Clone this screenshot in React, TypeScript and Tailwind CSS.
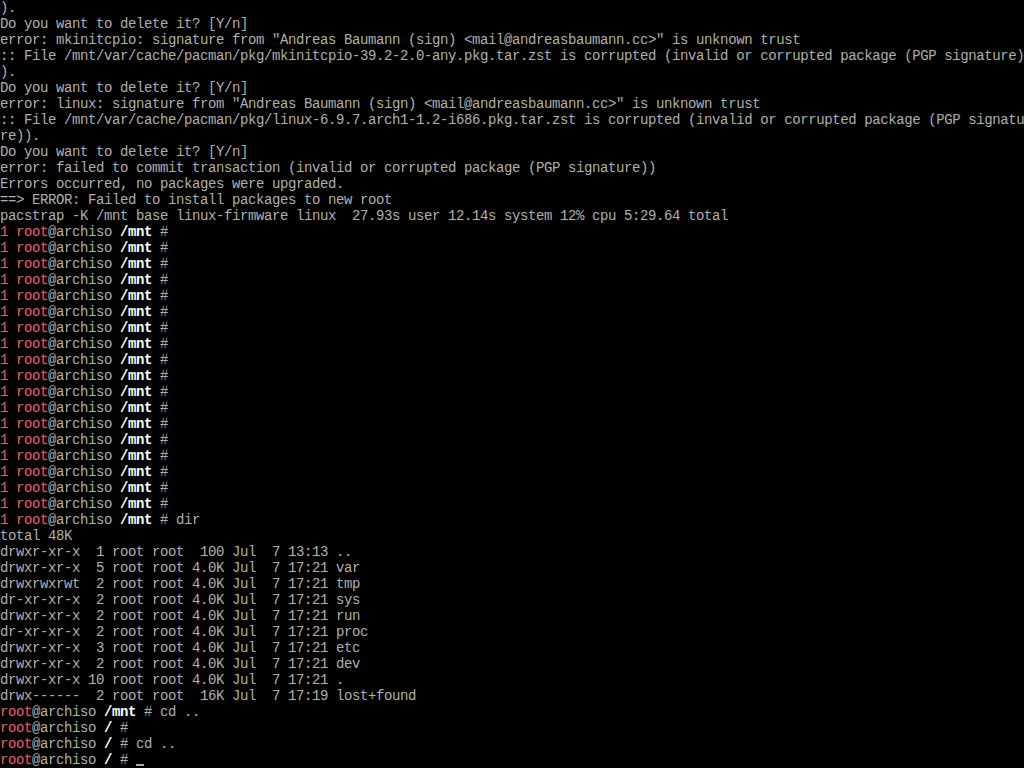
import React from "react";

const plain = [
  ").",
  "Do you want to delete it? [Y/n]",
  'error: mkinitcpio: signature from "Andreas Baumann (sign) <mail@andreasbaumann.cc>" is unknown trust',
  ":: File /mnt/var/cache/pacman/pkg/mkinitcpio-39.2-2.0-any.pkg.tar.zst is corrupted (invalid or corrupted package (PGP signature)",
  ").",
  "Do you want to delete it? [Y/n]",
  'error: linux: signature from "Andreas Baumann (sign) <mail@andreasbaumann.cc>" is unknown trust',
  ":: File /mnt/var/cache/pacman/pkg/linux-6.9.7.arch1-1.2-i686.pkg.tar.zst is corrupted (invalid or corrupted package (PGP signatu",
  "re)).",
  "Do you want to delete it? [Y/n]",
  "error: failed to commit transaction (invalid or corrupted package (PGP signature))",
  "Errors occurred, no packages were upgraded.",
  "==> ERROR: Failed to install packages to new root",
  "pacstrap -K /mnt base linux-firmware linux  27.93s user 12.14s system 12% cpu 5:29.64 total",
];

const listing = [
  "total 48K",
  "drwxr-xr-x  1 root root  100 Jul  7 13:13 ..",
  "drwxr-xr-x  5 root root 4.0K Jul  7 17:21 var",
  "drwxrwxrwt  2 root root 4.0K Jul  7 17:21 tmp",
  "dr-xr-xr-x  2 root root 4.0K Jul  7 17:21 sys",
  "drwxr-xr-x  2 root root 4.0K Jul  7 17:21 run",
  "dr-xr-xr-x  2 root root 4.0K Jul  7 17:21 proc",
  "drwxr-xr-x  3 root root 4.0K Jul  7 17:21 etc",
  "drwxr-xr-x  2 root root 4.0K Jul  7 17:21 dev",
  "drwxr-xr-x 10 root root 4.0K Jul  7 17:21 .",
  "drwx------  2 root root  16K Jul  7 17:19 lost+found",
];

function Line({ children }: { children?: React.ReactNode }) {
  return <div className="h-4 leading-4 whitespace-pre overflow-hidden">{children}</div>;
}

function Prompt({ status, dir, cmd }: { status?: boolean; dir: string; cmd?: string }) {
  return (
    <Line>
      {status && <span className="text-[#ec5f6c]">1 </span>}
      <span className="text-[#ec5f6c]">root</span>
      <span>@archiso </span>
      <span className="text-white font-bold">{dir}</span>
      <span> #{cmd ? " " + cmd : ""}</span>
    </Line>
  );
}

export default function App() {
  const empties = Array.from({ length: 18 });
  return (
    <div
      className="w-[1024px] h-[768px] bg-black text-[#b0b0b0] text-[14px] tracking-[-0.4px] overflow-hidden"
      style={{ fontFamily: '"Liberation Mono", "DejaVu Sans Mono", monospace' }}
    >
      {plain.map((l, i) => (
        <Line key={"p" + i}>{l}</Line>
      ))}
      {empties.map((_, i) => (
        <Prompt key={"e" + i} status dir="/mnt" />
      ))}
      <Prompt status dir="/mnt" cmd="dir" />
      {listing.map((l, i) => (
        <Line key={"l" + i}>{l}</Line>
      ))}
      <Prompt dir="/mnt" cmd="cd .." />
      <Prompt dir="/" />
      <Prompt dir="/" cmd="cd .." />
      <Line>
        <span className="text-[#ec5f6c]">root</span>
        <span>@archiso </span>
        <span className="text-white font-bold">/</span>
        <span> # </span>
        <span className="inline-block w-2 h-4 align-top relative">
          <span className="absolute left-0 bottom-[2px] w-2 h-[2px] bg-[#aaaaaa]" />
        </span>
      </Line>
    </div>
  );
}
